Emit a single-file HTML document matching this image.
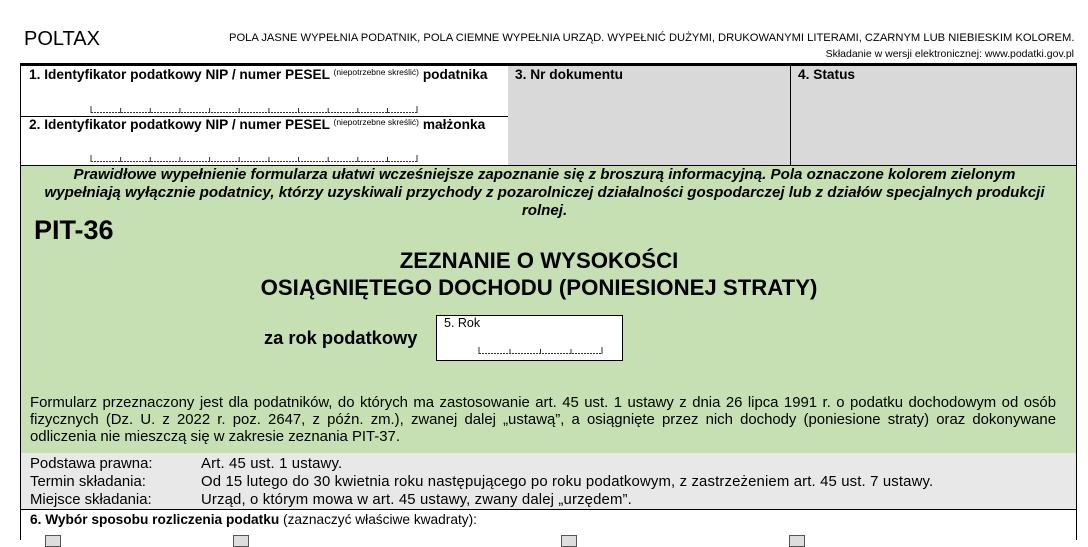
<html><head><style>
body{margin:0;width:1088px;height:537px;background:#fff;position:relative;overflow:hidden;font-family:"Liberation Sans",sans-serif;color:#000}
.a{position:absolute;white-space:nowrap}
.b{font-weight:bold}
.j{text-align:justify;text-align-last:justify;width:1026px}
</style></head><body>
<div class="a" style="left:24px;top:28px;font-size:20px">POLTAX</div>
<div class="a" style="left:229px;top:32px;font-size:11.2px">POLA JASNE WYPEŁNIA PODATNIK, POLA CIEMNE WYPEŁNIA URZĄD. WYPEŁNIĆ DUŻYMI, DRUKOWANYMI LITERAMI, CZARNYM LUB NIEBIESKIM KOLOREM.</div>
<div class="a" style="right:14px;top:48px;font-size:10.5px">Składanie w wersji elektronicznej: www.podatki.gov.pl</div>
<div class="a" style="left:20px;top:63px;width:1057px;height:3px;background:#000"></div>
<div class="a" style="left:20px;top:66px;width:487px;height:99px;border-left:1px solid #000;border-right:1px solid #000"></div>
<div class="a" style="left:20px;top:116px;width:488px;height:1px;background:#000"></div>
<div class="a" style="left:508px;top:66px;width:282px;height:99px;background:#d9d9d9"></div>
<div class="a" style="left:790px;top:66px;width:1px;height:99px;background:#000"></div>
<div class="a" style="left:791px;top:66px;width:285px;height:99px;background:#d9d9d9;border-right:1px solid #000"></div>
<div class="a b" style="left:29px;top:67px;font-size:13.7px">1. Identyfikator podatkowy NIP / numer PESEL <span style="font-weight:normal;font-size:8.5px;vertical-align:4px">(niepotrzebne skreślić)</span> podatnika</div>
<div class="a b" style="left:29px;top:117px;font-size:13.7px">2. Identyfikator podatkowy NIP / numer PESEL <span style="font-weight:normal;font-size:8.5px;vertical-align:4px">(niepotrzebne skreślić)</span> małżonka</div>
<div class="a b" style="left:515px;top:67px;font-size:13.7px">3. Nr dokumentu</div>
<div class="a b" style="left:798px;top:67px;font-size:13.7px">4. Status</div>
<svg class="a" style="left:0;top:0" width="1088" height="537">
<g stroke="#333" stroke-width="1" fill="none">
<path d="M91 112.5H417M91 161.5H417" stroke-dasharray="2 1"/>
<path d="M91 106V113M120.6 108V113M150.3 108V113M179.9 108V113M209.6 108V113M239.2 108V113M268.9 108V113M298.5 108V113M328.2 108V113M357.8 108V113M387.5 108V113M417 106V113"/>
<path d="M91 155V162M120.6 157V162M150.3 157V162M179.9 157V162M209.6 157V162M239.2 157V162M268.9 157V162M298.5 157V162M328.2 157V162M357.8 157V162M387.5 157V162M417 155V162"/>
</g></svg>
<div class="a" style="left:20px;top:165px;width:1055px;height:287px;background:#c6e0b4;border:1px solid #000"></div>
<div class="a b" style="left:20px;top:166px;width:1049px;text-align:center;font-style:italic;font-size:15.1px;line-height:18px;white-space:normal">Prawidłowe wypełnienie formularza ułatwi wcześniejsze zapoznanie się z broszurą informacyjną. Pola oznaczone kolorem zielonym<br>wypełniają wyłącznie podatnicy, którzy uzyskiwali przychody z pozarolniczej działalności gospodarczej lub z działów specjalnych produkcji<br>rolnej.</div>
<div class="a b" style="left:34px;top:215px;font-size:27px">PIT-36</div>
<div class="a b" style="left:20px;top:247px;width:1038px;text-align:center;font-size:22.2px;line-height:27px">ZEZNANIE O WYSOKOŚCI<br>OSIĄGNIĘTEGO DOCHODU (PONIESIONEJ STRATY)</div>
<div class="a b" style="left:264px;top:327px;font-size:18.3px">za rok podatkowy</div>
<div class="a" style="left:436px;top:315px;width:185px;height:44px;background:#fff;border:1px solid #000"></div>
<div class="a" style="left:444px;top:316px;font-size:12.5px">5. Rok</div>
<svg class="a" style="left:0;top:0" width="1088" height="537"><g stroke="#333" fill="none"><path d="M479 353.5H602" stroke-dasharray="2 1"/><path d="M479 347V354M510 349V354M540.5 349V354M571 349V354M602 347V354"/></g></svg>
<div class="a j" style="left:30px;top:395px;font-size:14.9px;line-height:17px;white-space:normal">Formularz przeznaczony jest dla podatników, do których ma zastosowanie art. 45 ust. 1 ustawy z dnia 26 lipca 1991 r. o podatku dochodowym od osób</div>
<div class="a j" style="left:30px;top:412px;font-size:14.9px;line-height:17px;white-space:normal">fizycznych (Dz. U. z 2022 r. poz. 2647, z późn. zm.), zwanej dalej „ustawą”, a osiągnięte przez nich dochody (poniesione straty) oraz dokonywane</div>
<div class="a" style="left:30px;top:429px;font-size:14.9px;line-height:17px">odliczenia nie mieszczą się w zakresie zeznania PIT-37.</div>
<div class="a" style="left:20px;top:453px;width:1055px;height:56px;background:#e8e8e8;border-left:1px solid #000;border-right:1px solid #000;border-bottom:1px solid #000"></div>
<div class="a" style="left:30px;top:455px;font-size:14.9px;line-height:18px">Podstawa prawna:<br>Termin składania:<br>Miejsce składania:</div>
<div class="a" style="left:201px;top:455px;font-size:14.9px;line-height:18px;letter-spacing:0.15px">Art. 45 ust. 1 ustawy.<br>Od 15 lutego do 30 kwietnia roku następującego po roku podatkowym, z zastrzeżeniem art. 45 ust. 7 ustawy.<br>Urząd, o którym mowa w art. 45 ustawy, zwany dalej „urzędem”.</div>
<div class="a" style="left:20px;top:510px;width:1055px;height:30px;border-left:1px solid #000;border-right:1px solid #000"></div>
<div class="a" style="left:30px;top:512px;font-size:13.7px"><b>6. Wybór sposobu rozliczenia podatku</b> (zaznaczyć właściwe kwadraty):</div>
<div class="a" style="left:45px;top:535px;width:14px;height:10px;border:1px solid #555;background:#ddd"></div>
<div class="a" style="left:233px;top:535px;width:14px;height:10px;border:1px solid #555;background:#ddd"></div>
<div class="a" style="left:561px;top:535px;width:14px;height:10px;border:1px solid #555;background:#ddd"></div>
<div class="a" style="left:789px;top:535px;width:14px;height:10px;border:1px solid #555;background:#ddd"></div>
</body></html>
